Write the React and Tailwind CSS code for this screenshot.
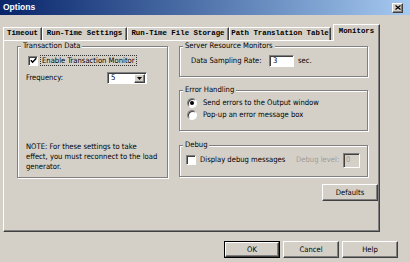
import React from "react";

const raised =
    "bg-[#d4d0c8] border border-t-white border-l-white border-b-[#404040] border-r-[#404040] shadow-[inset_-1px_-1px_0_#808080]";
const sunken =
    "border border-t-[#808080] border-l-[#808080] border-b-white border-r-white shadow-[inset_1px_1px_0_#404040]";
const group =
    "border border-[#808080] shadow-[inset_1px_1px_0_#fff,1px_1px_0_#fff] min-w-0";

const Legend = ({ children }) => (
    <legend className="ml-[3px] px-[2px] leading-[10px] bg-[#d4d0c8]">{children}</legend>
);

const Checkbox = ({ checked }) => (
    <span className={`w-[10px] h-[10px] bg-white flex items-center justify-center shrink-0 ${sunken}`}>
        {checked && (
            <svg width="7" height="7" viewBox="0 0 7 7">
                <path d="M0.8 3.2 L2.6 5.2 L6.3 1.2" stroke="#000" strokeWidth="1.5" fill="none" />
            </svg>
        )}
    </span>
);

const Radio = ({ checked }) => (
    <span className="w-[10px] h-[10px] rounded-full bg-white border border-t-[#808080] border-l-[#808080] border-b-white border-r-white shadow-[inset_1px_1px_0_#404040] flex items-center justify-center shrink-0">
        {checked && <span className="w-[4px] h-[4px] rounded-full bg-black" />}
    </span>
);

const Tab = ({ label, w, active }) =>
    active ? (
        <div className={`${w} h-[17px] -mb-px relative z-10 bg-[#d4d0c8] border-t border-l border-t-white border-l-white border-r border-r-[#404040] shadow-[inset_-1px_0_0_#808080] flex items-center justify-center pb-[2px]`}>
            {label}
        </div>
    ) : (
        <div className={`${w} h-[13px] bg-[#d4d0c8] border-t border-l border-t-white border-l-white border-r border-r-[#404040] shadow-[inset_-1px_0_0_#808080] flex items-center justify-center`}>
            {label}
        </div>
    );

const Button = ({ children, isDefault }) => (
    <div className={isDefault ? "border border-black" : ""}>
        <div className={`${isDefault ? "w-[54px] h-[15px]" : "w-[56px] h-[17px]"} ${raised} flex items-center justify-center`}>
            {children}
        </div>
    </div>
);

export default function App() {
    return (
        <div className="w-[410px] h-[262px] bg-[#d4d0c8] overflow-hidden flex flex-col font-['DejaVu_Sans_Condensed','Liberation_Sans',Arial,sans-serif] text-[7.6px] text-black">
            <div className="h-[15px] bg-gradient-to-r from-[#0a246a] to-[#a6caf0] flex items-center justify-between pl-[3px] pr-[7px]">
                <span className="text-white font-bold text-[8.5px] font-['Liberation_Sans',Arial,sans-serif]">Options</span>
                <div className={`w-[11px] h-[10px] ${raised} flex items-center justify-center`}>
                    <svg width="6" height="5" viewBox="0 0 6 5">
                        <path d="M0.5 0.5 L5.5 4.5 M5.5 0.5 L0.5 4.5" stroke="#000" strokeWidth="1.2" />
                    </svg>
                </div>
            </div>

            <div className="mt-[9px] h-[16px] flex items-end pl-[3px] font-['Liberation_Mono',monospace] font-bold text-[7.4px]">
                <Tab label="Timeout" w="w-[39px]" />
                <Tab label="Run-Time Settings" w="w-[85px]" />
                <Tab label="Run-Time File Storage" w="w-[102px]" />
                <Tab label="Path Translation Table" w="w-[102px]" />
                <Tab label="Monitors" w="w-[47px] ml-[2px]" active />
            </div>

            <div className="ml-[3px] w-[377px] h-[192px] border border-t-white border-l-white border-b-[#404040] border-r-[#404040] shadow-[inset_-1px_-1px_0_#808080] flex pl-[13px] gap-[11px]">
                <fieldset className={`${group} w-[151px] h-[137px]`}>
                    <Legend>Transaction Data</Legend>
                    <div className="mt-[4px] h-[11px] pl-[10px] flex items-center gap-[2px]">
                        <Checkbox checked />
                        <span className="border border-dotted border-[#333] px-[1px] leading-[9px]">Enable Transaction Monitor</span>
                    </div>
                    <div className="mt-[6px] h-[12px] pl-[8px] flex items-center">
                        <span className="w-[81px]">Frequency:</span>
                        <div className={`w-[40px] h-[12px] bg-white flex items-center justify-between ${sunken}`}>
                            <span className="pl-[3px]">5</span>
                            <div className={`w-[11px] h-[9px] mr-[1px] ${raised} flex items-center justify-center`}>
                                <svg width="5" height="3" viewBox="0 0 5 3">
                                    <path d="M0 0 H5 L2.5 3 Z" fill="#000" />
                                </svg>
                            </div>
                        </div>
                    </div>
                    <p className="mt-[58px] pl-[8px] leading-[10px]">
                        NOTE: For these settings to take
                        <br />
                        effect, you must reconnect to the load
                        <br />
                        generator.
                    </p>
                </fieldset>

                <div className="w-[198px] flex flex-col">
                    <fieldset className={`${group} w-[189px] h-[36px]`}>
                        <Legend>Server Resource Monitors</Legend>
                        <div className="mt-[4px] h-[12px] pl-[11px] flex items-center">
                            <span className="w-[78px]">Data Sampling Rate:</span>
                            <div className={`w-[25px] h-[12px] bg-white flex items-center pl-[3px] ${sunken}`}>3</div>
                            <span className="ml-[4px]">sec.</span>
                        </div>
                    </fieldset>

                    <fieldset className={`${group} mt-[8px] w-[189px] h-[46px]`}>
                        <Legend>Error Handling</Legend>
                        <div className="mt-[3px] h-[10px] pl-[7px] flex items-center gap-[6px]">
                            <Radio checked />
                            <span>Send errors to the Output window</span>
                        </div>
                        <div className="mt-[2px] h-[10px] pl-[7px] flex items-center gap-[6px]">
                            <Radio />
                            <span>Pop-up an error message box</span>
                        </div>
                    </fieldset>

                    <fieldset className={`${group} mt-[9px] w-[189px] h-[37px]`}>
                        <Legend>Debug</Legend>
                        <div className="mt-[2px] h-[16px] pl-[6px] flex items-center">
                            <Checkbox />
                            <span className="ml-[4px] w-[96px]">Display debug messages</span>
                            <span className="text-[#a09c94] w-[47px]">Debug level:</span>
                            <div className={`w-[17px] h-[15px] bg-[#d4d0c8] flex items-center pl-[2px] text-[#a09c94] ${sunken}`}>0</div>
                        </div>
                    </fieldset>

                    <div className="mt-[7px] self-end mr-[-1px]">
                        <Button>Defaults</Button>
                    </div>
                </div>
            </div>

            <div className="mt-[9px] flex justify-end gap-[3px] pr-[12px]">
                <Button isDefault>OK</Button>
                <Button>Cancel</Button>
                <Button>Help</Button>
            </div>
        </div>
    );
}
